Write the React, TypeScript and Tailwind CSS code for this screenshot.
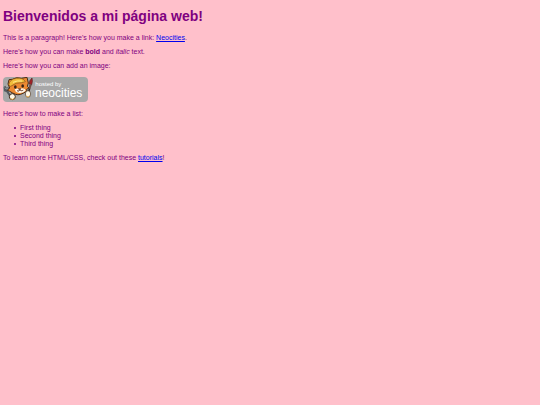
const things = ["First thing", "Second thing", "Third thing"];

function NeocitiesBadge() {
  return (
    <svg
      role="img"
      aria-label="Hosted by Neocities"
      viewBox="0 0 255 75"
      className="mt-[7px] block h-[25px] w-[85px]"
    >
      <rect width="255" height="75" rx="12" fill="#a8a8a8" />

      {/* Wrench and left paw */}
      <path d="M2 30l5-4 4 6 5-2 3 6-3 5 12 17-6 5-12-18-7-2z" fill="#555c61" />
      <path d="M6 32l4 4 4-1 10 18" fill="none" stroke="#c8cdd0" strokeWidth="2" />

      {/* Cat head */}
      <path
        d="M15 21L18 8l10-1Q40-1 55 4l17-3 4 17-3 10 5 5-7 4 1 5-12 7Q45 58 29 48L20 43l-7-3 7-7z"
        fill="#ec8a32"
        stroke="#4a2c18"
        strokeWidth="3"
        strokeLinejoin="round"
      />
      <path d="M35 37Q43 33 48 35Q58 32 66 37l2 4Q56 52 39 45z" fill="#fff5e8" />
      <path d="M17 24Q20 6 41 4Q60 1 67 14l-10 3Q39 15 23 28z" fill="#f2bd3c" stroke="#865416" strokeWidth="2" />
      <path d="M30 16Q42 10 57 12" fill="none" stroke="#ffe88c" strokeWidth="3" />
      <ellipse cx="37" cy="30" rx="4" ry="5" fill="#3a2416" />
      <ellipse cx="59" cy="27" rx="4" ry="5" fill="#3a2416" />
      <path d="M46 35h8l-4 4zM42 41q5 4 9-2q5 5 10 0" fill="#844027" stroke="#5b321f" strokeWidth="2" />

      {/* Paws and brush */}
      <ellipse cx="28" cy="59" rx="9" ry="9" fill="#fff7e6" stroke="#3a2a1c" strokeWidth="3" />
      <path d="M22 65q7 5 12-1" fill="none" stroke="#efb04b" strokeWidth="3" />
      <path d="M80 34l-5 16" stroke="#342923" strokeWidth="5" />
      <path d="M79 21Q79 9 87 3q3 10-1 20z" fill="#a82226" stroke="#542022" strokeWidth="2" />
      <path d="M79 22l7 2-4 12-5-2z" fill="#705248" />
      <ellipse cx="75" cy="51" rx="8" ry="10" fill="#fff7e6" stroke="#4a3522" strokeWidth="2" />
      <path d="M70 58q6 5 10-2" fill="none" stroke="#efb04b" strokeWidth="3" />

      <g fill="white" className="font-['Liberation_Sans',Arial,sans-serif]">
        <text x="97" y="27" fontSize="18">hosted by</text>
        <text x="96" y="60" fontSize="36">neocities</text>
      </g>
    </svg>
  );
}

export default function App() {
  return (
    <main className="min-h-screen bg-[#ffc0cb] px-[3px] pt-2 font-['Liberation_Sans',Arial,sans-serif] text-[7px] leading-[8px] text-[#800080]">
      <h1 className="text-[14px] leading-4 font-bold">Bienvenidos a mi página web!</h1>

      <p className="mt-2.5">
        This is a paragraph! Here's how you make a link:{" "}
        <a href="https://neocities.org" className="text-[#0000ee] underline">Neocities</a>.
      </p>
      <p className="mt-1.5">
        Here's how you can make <strong className="font-bold">bold</strong> and <em>italic</em> text.
      </p>
      <p className="mt-1.5">Here's how you can add an image:</p>

      <NeocitiesBadge />

      <p className="mt-2">Here's how to make a list:</p>
      <ul className="mt-1.5 pl-[11px]">
        {things.map((thing) => (
          <li
            key={thing}
            className="flex items-center before:mr-1 before:size-0.5 before:rounded-full before:bg-current before:content-['']"
          >
            {thing}
          </li>
        ))}
      </ul>

      <p className="mt-1.5">
        To learn more HTML/CSS, check out these{" "}
        <a href="https://neocities.org/tutorials" className="text-[#0000ee] underline">tutorials</a>!
      </p>
    </main>
  );
}
